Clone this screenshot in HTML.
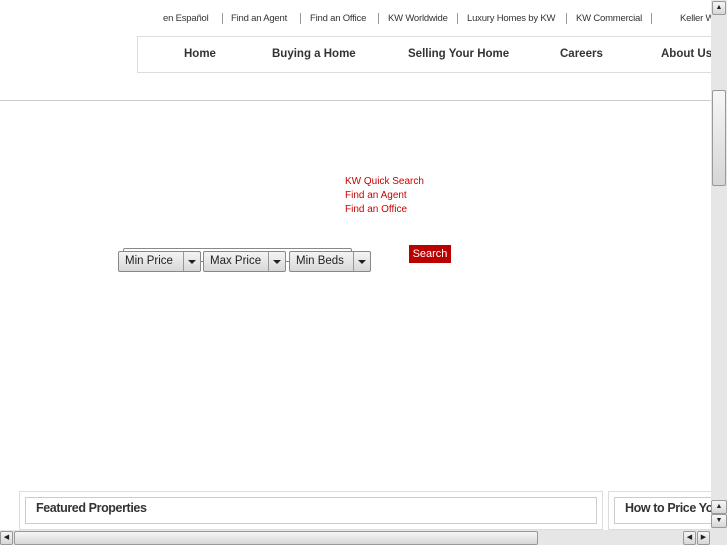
<!DOCTYPE html><html><head><style>
body{margin:0;width:727px;height:545px;overflow:hidden;background:#fff;font-family:"Liberation Sans",sans-serif;position:relative}
.a{position:absolute}
.top{top:13px;font-size:9.5px;color:#333;white-space:nowrap;letter-spacing:-0.2px}
.s{position:absolute;top:13px;width:1px;height:11px;background:#999}
.nav{top:36px;left:137px;width:600px;height:37px;border:1px solid #ddd;box-sizing:border-box;font-weight:bold;font-size:11.5px;color:#333}
.nav span{position:absolute;top:11px}
.red{color:#c00;font-size:10px;left:345px}
.sel{top:251px;height:21px;border:1px solid #888;border-radius:2px;background:linear-gradient(#f4f4f4,#d8d8d8);box-sizing:border-box;font-size:11.5px;color:#222}
.sel .t{position:absolute;left:6px;top:3px}
.sel .d{position:absolute;right:0;top:0;width:16px;height:19px;border-left:1px solid #999}
.sel .d:after{content:"";position:absolute;left:4px;top:8px;border:4px solid transparent;border-top:4px solid #222}
.sb{background:#e6e6e6}
.btn{background:linear-gradient(#f6f6f6,#d6d6d6);border:1px solid #999;box-sizing:border-box;border-radius:2px;font-size:7px;text-align:center;line-height:12px;color:#222}
</style></head><body>
<div class="a top" style="left:163px">en Español</div><div class="s" style="left:222px"></div>
<div class="a top" style="left:231px">Find an Agent</div><div class="s" style="left:300px"></div>
<div class="a top" style="left:310px">Find an Office</div><div class="s" style="left:378px"></div>
<div class="a top" style="left:388px">KW Worldwide</div><div class="s" style="left:457px"></div>
<div class="a top" style="left:467px">Luxury Homes by KW</div><div class="s" style="left:566px"></div>
<div class="a top" style="left:576px">KW Commercial</div><div class="s" style="left:651px"></div>
<div class="a top" style="left:680px">Keller W</div>
<div class="a nav"><span style="left:46px">Home</span><span style="left:134px">Buying a Home</span><span style="left:270px">Selling Your Home</span><span style="left:422px">Careers</span><span style="left:523px">About Us</span></div>
<div class="a" style="left:0;top:100px;width:711px;height:1px;background:#ccc"></div>
<div class="a red" style="top:176px">KW Quick Search</div>
<div class="a red" style="top:190px">Find an Agent</div>
<div class="a red" style="top:204px">Find an Office</div>
<div class="a" style="left:123px;top:248px;width:227px;height:12px;border:1px solid #888;border-radius:2px"></div>
<div class="a sel" style="left:118px;width:83px"><span class="t">Min Price</span><span class="d"></span></div>
<div class="a sel" style="left:203px;width:83px"><span class="t">Max Price</span><span class="d"></span></div>
<div class="a sel" style="left:289px;width:82px"><span class="t">Min Beds</span><span class="d"></span></div>
<div class="a" style="left:409px;top:245px;width:42px;height:18px;background:#b00;color:#fff;font-size:11px;text-align:center;line-height:18px">Search</div>
<div class="a" style="left:19px;top:491px;width:584px;height:39px;border:1px solid #ddd;box-sizing:border-box"></div>
<div class="a" style="left:25px;top:497px;width:572px;height:27px;border:1px solid #ccc;box-sizing:border-box;font-weight:bold;font-size:12.5px;color:#333;padding:3px 0 0 10px;letter-spacing:-0.4px">Featured Properties</div>
<div class="a" style="left:608px;top:491px;width:110px;height:39px;border:1px solid #ddd;box-sizing:border-box"></div>
<div class="a" style="left:614px;top:497px;width:110px;height:27px;border:1px solid #ccc;box-sizing:border-box;font-weight:bold;font-size:12.5px;color:#333;padding:3px 0 0 10px;white-space:nowrap;overflow:hidden;letter-spacing:-0.4px">How to Price Yo</div>
<div class="a sb" style="left:711px;top:0;width:16px;height:530px"></div>
<div class="a btn" style="left:712px;top:1px;width:14px;height:14px">▲</div>
<div class="a btn" style="left:712px;top:90px;width:14px;height:96px"></div>
<div class="a btn" style="left:711px;top:500px;width:16px;height:14px">▲</div>
<div class="a btn" style="left:711px;top:514px;width:16px;height:14px">▼</div>
<div class="a sb" style="left:0;top:530px;width:727px;height:15px"></div>
<div class="a btn" style="left:0;top:531px;width:13px;height:14px">◀</div>
<div class="a btn" style="left:14px;top:531px;width:524px;height:14px"></div>
<div class="a btn" style="left:683px;top:531px;width:13px;height:14px">◀</div>
<div class="a btn" style="left:697px;top:531px;width:13px;height:14px">▶</div>
</body></html>
